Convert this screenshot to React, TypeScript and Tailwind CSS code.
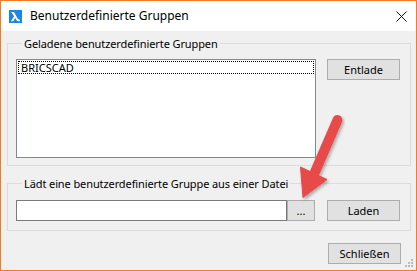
import React from 'react';

const font = { fontFamily: '"Segoe UI", "Noto Sans", Arial, sans-serif' };

const Button: React.FC<{ label: string; className?: string }> = ({ label, className }) => (
  <button
    className={`h-[21px] bg-[#e1e1e1] border border-[#adadad] text-[11px] leading-none text-black flex items-center justify-center ${className ?? ''}`}
  >
    {label}
  </button>
);

const App: React.FC = () => {
  return (
    <div
      className="relative w-[417px] h-[271px] border border-[#f47b20] bg-[#f0f0f0] flex flex-col text-[11px] text-black overflow-hidden"
      style={font}
    >
      {/* title bar */}
      <div className="h-[30px] bg-white flex items-center shrink-0">
        <div className="ml-[8px] w-[13px] h-[13px] bg-[#1d86e2] flex items-center justify-center">
          <svg width="13" height="13" viewBox="0 0 13 13">
            <path
              d="M2.2 2 L5 2 L8.6 8.6 Q9.3 9.8 10.8 9.6 L10.8 11.2 Q8.3 11.8 7.3 9.8 L6.3 7.9 L4.2 11.2 L2 11.2 L5.1 6.2 Z"
              fill="white"
            />
          </svg>
        </div>
        <span className="ml-[8px] text-[12px] leading-none">Benutzerdefinierte Gruppen</span>
        <svg className="ml-auto mr-[9px]" width="11" height="11" viewBox="0 0 11 11">
          <path d="M0.5 0.5 L10.5 10.5 M10.5 0.5 L0.5 10.5" stroke="#111" strokeWidth="1" />
        </svg>
      </div>

      {/* body */}
      <div className="flex-1 pl-[6px] pr-[5px] flex flex-col">
        <fieldset className="mt-[5px] border border-[#dcdcdc] pl-[8px] pr-[10px] pt-[8px] pb-[7px] flex gap-[11px] items-start">
          <legend className="ml-[6px] px-[2px] leading-[15px] tracking-[-0.1px]">Geladene benutzerdefinierte Gruppen</legend>
          <div className="w-[300px] h-[99px] bg-white border border-[#828790] p-px">
            <div className="h-[13px] border border-dotted border-black pl-[2px] flex items-center leading-none">
              BRICSCAD
            </div>
          </div>
          <Button label="Entlade" className="w-[73px]" />
        </fieldset>

        <fieldset className="mt-[10px] border border-[#dcdcdc] pl-[8px] pr-[10px] pt-[9px] pb-[9px] flex items-start">
          <legend className="ml-[6px] px-[2px] leading-[15px] tracking-[-0.1px]">Lädt eine benutzerdefinierte Gruppe aus einer Datei</legend>
          <div className="w-[271px] h-[21px] bg-white border border-[#7a7a7a]" />
          <Button label="..." className="w-[28px] text-[#333]" />
          <Button label="Laden" className="w-[73px] ml-[12px]" />
        </fieldset>

        <div className="mt-[12px] flex justify-end pr-[10px]">
          <Button label="Schließen" className="w-[73px]" />
        </div>
      </div>

      {/* resize grip */}
      <svg className="absolute right-[2px] bottom-[2px]" width="10" height="10" viewBox="0 0 10 10">
        <rect x="7" y="1" width="2" height="2" fill="#bcbcbc" />
        <rect x="4" y="4" width="2" height="2" fill="#bcbcbc" />
        <rect x="7" y="4" width="2" height="2" fill="#bcbcbc" />
        <rect x="1" y="7" width="2" height="2" fill="#bcbcbc" />
        <rect x="4" y="7" width="2" height="2" fill="#bcbcbc" />
        <rect x="7" y="7" width="2" height="2" fill="#bcbcbc" />
      </svg>

      {/* red annotation arrow */}
      <svg className="absolute left-[-1px] top-[-1px] pointer-events-none" width="417" height="271" viewBox="0 0 417 271">
        <defs>
          <filter id="sh" x="-20%" y="-20%" width="140%" height="140%">
            <feDropShadow dx="1.5" dy="2" stdDeviation="1.5" floodColor="#000" floodOpacity="0.3" />
          </filter>
        </defs>
        <g filter="url(#sh)" fill="#e8494a" stroke="#e8494a">
          <line x1="337.5" y1="120" x2="315" y2="172" strokeWidth="10" strokeLinecap="round" />
          <polygon points="300.5,167 327,179.5 303,197.5" strokeWidth="1" strokeLinejoin="round" />
        </g>
      </svg>
    </div>
  );
};

export default App;
